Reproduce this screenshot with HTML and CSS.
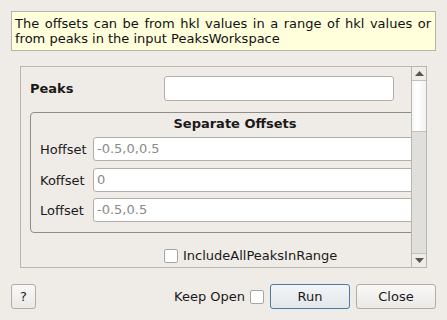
FILE: index.html
```html
<!DOCTYPE html>
<html>
<head>
<meta charset="utf-8">
<link rel="stylesheet" href="styles.css">
</head>
<body>
<div class="dialog">
  <div class="tip">The offsets can be from hkl values in a range of hkl values or from peaks in the input PeaksWorkspace</div>
  <div class="scroll">
    <div class="content">
      <div class="peaks-row">
        <span class="peaks-label">Peaks</span>
        <div class="input peaks-input"></div>
      </div>
      <div class="group">
        <div class="group-title">Separate Offsets</div>
        <div class="field"><span class="flabel">Hoffset</span><div class="input fin">-0.5,0,0.5</div></div>
        <div class="field"><span class="flabel">Koffset</span><div class="input fin">0</div></div>
        <div class="field"><span class="flabel">Loffset</span><div class="input fin">-0.5,0.5</div></div>
      </div>
      <div class="check-row"><span class="cbox"></span><span>IncludeAllPeaksInRange</span></div>
    </div>
    <div class="vbar">
      <div class="arrow up"><svg width="9" height="5" viewBox="0 0 9 5"><path d="M4.5 0 L9 5 L0 5 Z" fill="#555"/></svg></div>
      <div class="handle"></div>
      <div class="track"></div>
      <div class="arrow down"><svg width="9" height="5" viewBox="0 0 9 5"><path d="M0 0 L9 0 L4.5 5 Z" fill="#555"/></svg></div>
    </div>
  </div>
  <div class="buttons">
    <div class="btn help">?</div>
    <div class="spacer"></div>
    <span class="keep">Keep Open</span>
    <span class="cbox keep-box"></span>
    <div class="btn run">Run</div>
    <div class="btn close">Close</div>
  </div>
</div>
</body>
</html>
```
FILE: styles.css
```css
html, body {
  margin: 0;
  padding: 0;
  background: #efebe7;
}
body {
  font-family: "DejaVu Sans", sans-serif;
  font-size: 13px;
  color: #1a1a1a;
  width: 447px;
  height: 320px;
  overflow: hidden;
}
.dialog {
  display: flex;
  flex-direction: column;
  padding: 11px 11px 0 11px;
}
.tip {
  height: 40px;
  box-sizing: border-box;
  background: #ffffdc;
  border: 1px solid #b4b4ac;
  padding: 4px 4px 0 3px;
  line-height: 15px;
  text-align: justify;
  text-align-last: left;
  color: #111;
}
.scroll {
  margin: 15px 9px 0 9px;
  height: 202px;
  box-sizing: border-box;
  border: 1px solid #b9b6b2;
  display: flex;
  overflow: hidden;
}
.content {
  flex: 1;
  overflow: hidden;
  padding: 9px 0 0 9px;
  display: flex;
  flex-direction: column;
  min-width: 0;
}
.peaks-row {
  display: flex;
  align-items: center;
  height: 25px;
}
.peaks-label {
  font-weight: bold;
  width: 134px;
  flex: none;
}
.input {
  box-sizing: border-box;
  background: #fff;
  border: 1px solid #b2afab;
  border-radius: 3px;
}
.peaks-input {
  width: 230px;
  height: 25px;
}
.group {
  margin-top: 11px;
  width: 410px;
  flex: none;
  box-sizing: border-box;
  height: 121px;
  border: 1px solid #8e8c89;
  border-radius: 4px;
  padding: 0 0 0 9px;
}
.group-title {
  font-weight: bold;
  text-align: center;
  height: 24px;
  line-height: 22px;
  padding-right: 9px;
}
.field {
  display: flex;
  align-items: center;
  height: 24px;
  margin-bottom: 7px;
}
.flabel {
  width: 53px;
  flex: none;
}
.fin {
  width: 340px;
  flex: none;
  height: 24px;
  line-height: 22px;
  padding-left: 3px;
  color: #8a8a8a;
  border-radius: 3px 0 0 3px;
}
.field:nth-child(3) { margin-bottom: 6px; }
.check-row {
  display: flex;
  align-items: center;
  margin-top: 15px;
  padding-left: 134px;
  gap: 5px;
}
.cbox {
  display: inline-block;
  width: 14px;
  height: 14px;
  box-sizing: border-box;
  background: #fff;
  border: 1px solid #a9a6a2;
  border-radius: 2px;
  flex: none;
}
.vbar {
  width: 14px;
  flex: none;
  border-left: 1px solid #b9b6b2;
  display: flex;
  flex-direction: column;
}
.arrow {
  height: 13px;
  display: flex;
  align-items: center;
  justify-content: center;
  background: #efebe7;
  flex: none;
}
.arrow.up { border-bottom: 1px solid #c3c0bc; }
.arrow.down { border-top: 1px solid #c3c0bc; height: 13px; }
.handle {
  height: 50px;
  flex: none;
  background: linear-gradient(to right, #f6f6f6, #ffffff 40%, #f1f1f1);
  border-bottom: 1px solid #c3c0bc;
}
.track {
  flex: 1;
  background: #e1dfdc;
}
.buttons {
  display: flex;
  align-items: center;
  margin-top: 16px;
  height: 25px;
}
.spacer { flex: 1; }
.btn {
  box-sizing: border-box;
  height: 25px;
  border: 1px solid #b0ada9;
  border-radius: 3px;
  background: linear-gradient(#f9f8f7, #ebe9e6);
  display: flex;
  align-items: center;
  justify-content: center;
  color: #1a1a1a;
}
.help {
  width: 25px;
}
.keep {
  margin-right: 5px;
}
.keep-box {
  margin-right: 6px;
}
.run {
  width: 80px;
  border-color: #4a7aa6;
  background: linear-gradient(#f3f5f7, #e2e6ea);
}
.close {
  width: 80px;
  margin-left: 6px;
}
```
